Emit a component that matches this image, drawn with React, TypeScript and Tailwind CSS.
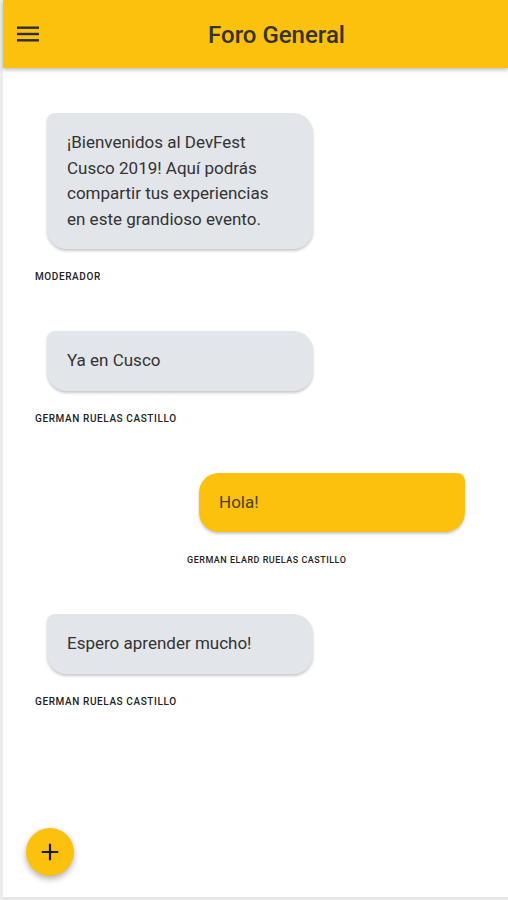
import React from "react";

type Msg = { text: string[]; author: string; mine?: boolean };

const messages: Msg[] = [
  {
    text: [
      "¡Bienvenidos al DevFest",
      "Cusco 2019! Aquí podrás",
      "compartir tus experiencias",
      "en este grandioso evento.",
    ],
    author: "MODERADOR",
  },
  { text: ["Ya en Cusco"], author: "GERMAN RUELAS CASTILLO" },
  { text: ["Hola!"], author: "GERMAN ELARD RUELAS CASTILLO", mine: true },
  { text: ["Espero aprender mucho!"], author: "GERMAN RUELAS CASTILLO" },
];

function Bubble({ m }: { m: Msg }) {
  return (
    <div className={m.mine ? "flex flex-col items-start ml-[196px]" : "flex flex-col items-start ml-[44px]"}>
      <div
        className={
          m.mine
            ? "w-[266px] rounded-[20px] rounded-tr-[8px] bg-[#fcc10c] pl-[20px] pr-3 py-[17px] text-[17px] leading-[25.5px] text-[#4a4128] shadow-[0_2px_3px_rgba(0,0,0,0.22)]"
            : "w-[266px] rounded-[20px] rounded-tl-[8px] bg-[#e2e5e9] pl-[20px] pr-3 py-[17px] text-[17px] leading-[25.5px] text-[#333] shadow-[0_2px_3px_rgba(0,0,0,0.22)]"
        }
      >
        {m.text.map((t, i) => (
          <div key={i} className="whitespace-nowrap">{t}</div>
        ))}
      </div>
      <div
        className={
          m.mine
            ? "-ml-3 mt-[22px] text-[9px] leading-[12px] font-medium tracking-[0.5px] text-[#222]"
            : "-ml-3 mt-[22px] text-[10px] leading-[12px] font-medium tracking-[0.6px] text-[#222]"
        }
      >
        {m.author}
      </div>
    </div>
  );
}

export default function App() {
  return (
    <div
      className="relative flex h-[900px] w-[508px] overflow-hidden bg-white"
      style={{ fontFamily: "Roboto, 'Noto Sans', sans-serif" }}
    >
      <div className="w-[3px] shrink-0 bg-[#ececec]" />
      <div className="flex flex-1 flex-col">
        <header className="relative z-10 flex h-[68px] shrink-0 items-center bg-[#fcc10c] shadow-[0_2px_4px_rgba(0,0,0,0.25)]">
          <div className="flex w-[50px] shrink-0 items-center pl-[14px]">
            <svg width="22" height="16" viewBox="0 0 22 16">
              <rect x="0" y="0.5" width="22" height="2.4" fill="#2b2b2b" />
              <rect x="0" y="6.8" width="22" height="2.4" fill="#2b2b2b" />
              <rect x="0" y="13.1" width="22" height="2.4" fill="#2b2b2b" />
            </svg>
          </div>
          <div className="flex-1 text-center text-[24px] font-medium text-[#333] pr-[8px] pt-[2px]">
            Foro General
          </div>
        </header>
        <main className="flex flex-1 flex-col gap-[48px] pt-[45px]">
          {messages.map((m, i) => (
            <Bubble key={i} m={m} />
          ))}
        </main>
        <div className="h-[3px] shrink-0 bg-[#e6e6e6]" />
      </div>
      <button className="absolute left-[26px] top-[828px] flex h-[48px] w-[48px] items-center justify-center rounded-full bg-[#fcc10c] shadow-[0_3px_6px_rgba(0,0,0,0.3)]">
        <svg width="22" height="22" viewBox="0 0 24 24">
          <path d="M12 3v18M3 12h18" stroke="#1a1a1a" strokeWidth="2.4" />
        </svg>
      </button>
    </div>
  );
}
